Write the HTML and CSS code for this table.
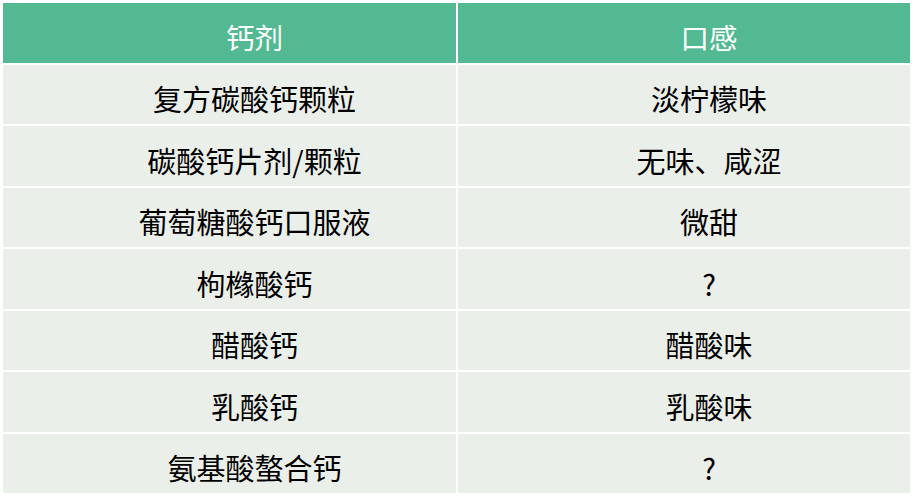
FILE: index.html
```html
<!DOCTYPE html>
<html lang="zh">
<head>
<meta charset="utf-8">
<link rel="stylesheet" href="styles.css">
</head>
<body>
<div class="table">
  <div class="cell head">钙剂</div><div class="cell head">口感</div>
  <div class="cell">复方碳酸钙颗粒</div><div class="cell">淡柠檬味</div>
  <div class="cell">碳酸钙片剂/颗粒</div><div class="cell">无味、咸涩</div>
  <div class="cell">葡萄糖酸钙口服液</div><div class="cell">微甜</div>
  <div class="cell">枸橼酸钙</div><div class="cell">?</div>
  <div class="cell">醋酸钙</div><div class="cell">醋酸味</div>
  <div class="cell">乳酸钙</div><div class="cell">乳酸味</div>
  <div class="cell">氨基酸螯合钙</div><div class="cell">?</div>
</div>
</body>
</html>
```
FILE: styles.css
```css
html, body {
  margin: 0;
  padding: 0;
  background: #ffffff;
}
body {
  padding: 3px 4px 11px 3px;
  width: 907px;
  height: 490px;
  font-family: "Noto Sans CJK SC", "Noto Sans", sans-serif;
}
.table {
  display: grid;
  grid-template-columns: 453px 452px;
  grid-template-rows: repeat(8, 1fr);
  column-gap: 2px;
  row-gap: 2px;
  height: 490px;
}
.cell {
  background: #ebefea;
  color: #000;
  font-size: 29px;
  display: flex;
  align-items: center;
  justify-content: center;
  padding-left: 50px;
  padding-top: 9px;
  box-sizing: border-box;
  line-height: 1;
}
.head {
  background: #52b992;
  color: #ffffff;
  font-size: 28.5px;
}
```
